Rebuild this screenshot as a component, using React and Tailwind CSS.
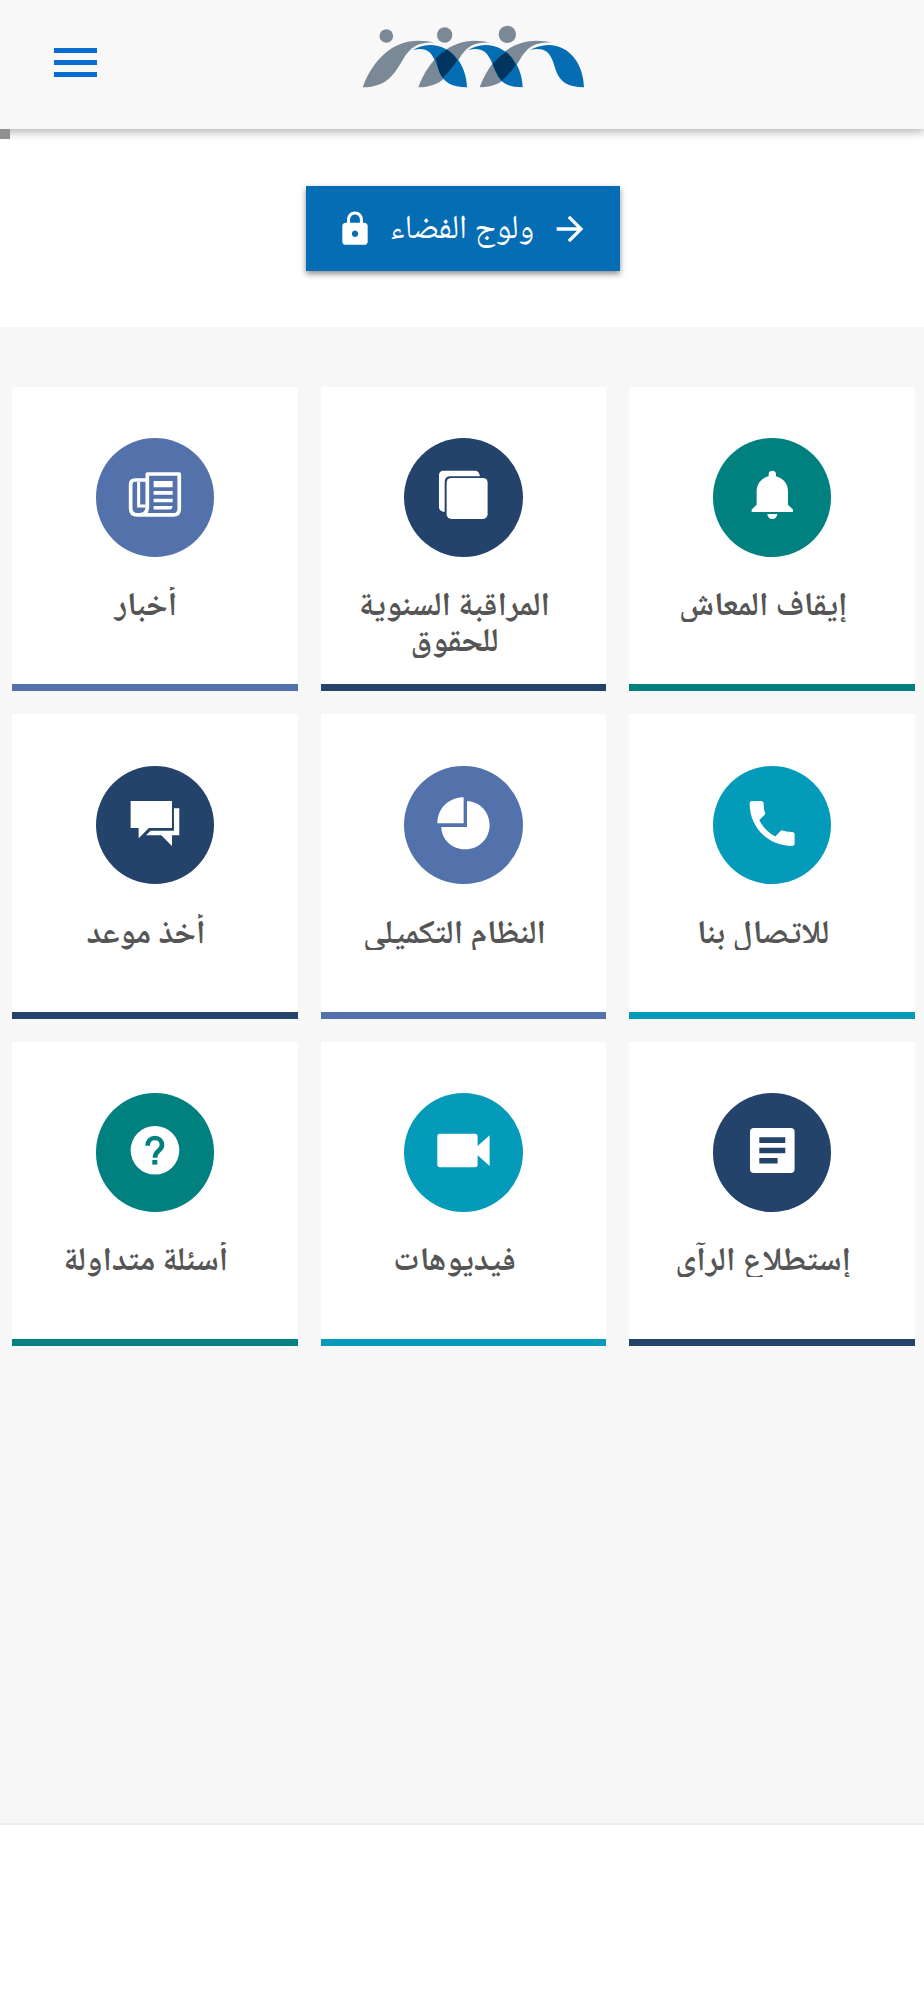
import React from 'react';

const cards = [
  {
    title: ['أخبار'],
    bg: 'bg-[#5372ac]',
    viewBox: '287 204 356 356',
    icon: (
      <>
        <path d="M441 414V312H537V417Q537 435 519 435H411Q391 435 391 415V343Q391 330 404 330H441M441 410Q441 433 420 434" fill="none" stroke="#fff" strokeWidth="11" strokeLinejoin="round" />
        <path d="M415 336V408H436" fill="none" stroke="#fff" strokeWidth="9" />
        <path d="M460 333H517V352H460zM460 363H517V374H460zM460 386H517V397H460zM460 408H517Q515 419 508 419H460z" />
      </>
    ),
  },
  {
    title: ['المراقبة السنوية', 'للحقوق'],
    bg: 'bg-[#24436b]',
    viewBox: '283 204 356 356',
    icon: (
      <>
        <path d="M402 302H496Q509 302 511 319H422Q405 319 405 336V426Q388 424 388 411V316Q388 302 402 302z" />
        <rect x="411" y="324" width="123" height="123" rx="14" />
      </>
    ),
  },
  {
    title: ['إيقاف المعاش'],
    bg: 'bg-[#018080]',
    viewBox: '298 204 356 356',
    icon: (
      <>
        <path d="M465 319V313Q465 302 476 302T487 313V319C510 325 523 342 523 364V404L538 419V426H414V419L429 404V364C429 342 442 325 465 319z" />
        <path d="M461 432H491Q489 447 476 447T461 432z" />
      </>
    ),
  },
  {
    title: ['أخذ موعد'],
    bg: 'bg-[#24436b]',
    viewBox: '287 197 356 356',
    icon: (
      <>
        <path d="M391 302H515V383H446L415 414V383H391z" />
        <path d="M521 324H537V405H515V437L483 405H437L451 391H521z" />
      </>
    ),
  },
  {
    title: ['النظام التكميلي'],
    bg: 'bg-[#5372ac]',
    viewBox: '283 197 356 356',
    icon: (
      <>
        <path d="M462 291V369H383C383 323 419 291 462 291z" />
        <path d="M472 302C512 304 540 336 540 374C540 415 508 447 467 447C428 447 396 419 395 380H472z" />
      </>
    ),
  },
  {
    title: ['للاتصال بنا'],
    bg: 'bg-[#049aba]',
    viewBox: '298 197 356 356',
    icon: (
      <path d="M415 302H442Q450 302 450 310Q450 327 455 341L437 360Q454 392 485 409L503 390Q519 395 535 395Q543 395 543 403V430Q543 437 535 437C463 437 408 380 408 310Q408 302 415 302z" />
    ),
  },
  {
    title: ['أسئلة متداولة'],
    bg: 'bg-[#018080]',
    viewBox: '287 190 356 356',
    icon: (
      <>
        <circle cx="464" cy="362" r="73" />
        <path d="M442 348C442 334 451 325 464 325S485 334 485 347C485 363 464 363 464 384" fill="none" stroke="#018080" strokeWidth="14" />
        <path d="M456 391H471V405H456z" fill="#018080" />
      </>
    ),
  },
  {
    title: ['فيديوهات'],
    bg: 'bg-[#049aba]',
    viewBox: '1213 190 356 356',
    icon: (
      <path d="M1321 312H1426Q1434 312 1434 320V349L1470 317V409L1434 377V405Q1434 413 1426 413H1321Q1313 413 1313 405V320Q1313 312 1321 312z" />
    ),
  },
  {
    title: ['إستطلاع الرآي'],
    bg: 'bg-[#24436b]',
    viewBox: '754 190 356 356',
    icon: (
      <>
        <rect x="865" y="295" width="134" height="135" rx="12" />
        <path d="M893 323H971V340H893zM893 354H971V371H893zM893 385H948V402H893z" fill="#24436b" />
      </>
    ),
  },
];

function Logo() {
  return (
    <svg viewBox="0 0 750 255" className="w-[250px] h-[85px]">
      <g fill="#7b8997">
        <circle cx="109" cy="63" r="20.500" />
        <circle cx="284" cy="60" r="23" />
        <circle cx="472" cy="58" r="26" />
        <path d="M38 217C70 130 130 77 205 77Q235 77 257 83C200 80 180 100 160 132C135 172 115 217 38 217z" />
        <path d="M205 217C237 130 300 77 375 77Q402 77 421 83C366 80 347 100 327 132C302 172 278 217 205 217z" />
        <path d="M389 217C421 130 484 77 559 77Q588 77 607 83C550 80 531 100 511 132C486 172 462 217 389 217z" />
      </g>
      <g fill="#056db3">
        <path d="M189 105Q210 91 240 90C305 90 350 150 351 217C305 217 283 203 270 175C252 130 245 90 189 105z" />
        <path d="M355 105Q376 91 406 90C471 90 517 150 518 217C472 217 452 203 439 175C421 130 411 90 355 105z" />
        <path d="M540 105Q565 91 595 90C660 90 701 150 702 217C656 217 634 203 621 175C606 130 600 90 540 105z" />
      </g>
      <g fill="#00355f">
        <path d="M257 130Q272 113 291 104Q310 114 322 136Q302 167 278 189Q268 175 264 158Q261 141 257 130z" />
        <path d="M428 146Q444 126 468 111Q487 125 497 149Q480 177 455 197Q444 185 438 171Q431 155 428 146z" />
      </g>
    </svg>
  );
}

function Header() {
  return (
    <header className="relative z-10 flex h-[129px] bg-[#f8f8f8] shadow-[0_3px_9px_rgba(0,0,0,0.3)]">
      <button className="ml-[54px] mt-[48px] flex h-[29px] w-[43px] flex-col justify-between">
        <span className="h-[5px] w-full bg-[#0a6ed1]"></span>
        <span className="h-[5px] w-full bg-[#0a6ed1]"></span>
        <span className="h-[5px] w-full bg-[#0a6ed1]"></span>
      </button>
      <div className="ml-[253px] mt-[15px]">
        <Logo />
      </div>
    </header>
  );
}

function Card({ card }) {
  return (
    <div className={"h-[304.500px] pb-[7px] " + card.bg}>
      <div className="flex h-full flex-col items-center bg-white pt-[51.500px]">
        <div className={"size-[118.600px] shrink-0 rounded-full " + card.bg}>
          <svg viewBox={card.viewBox} fill="#fff" className="size-full">{card.icon}</svg>
        </div>
        <h3 dir="rtl" className="mt-[30px] w-full overflow-hidden pr-[1px] pl-[1px] text-center">
          {card.title.map((line) => (
            <span key={line} className="block h-[35.500px] -translate-x-[9px] pt-[4.500px] text-[33px] leading-[35.500px] font-bold whitespace-nowrap text-[#555]">
              {line}
            </span>
          ))}
        </h3>
      </div>
    </div>
  );
}

export default function App() {
  return (
    <div className="min-h-[2000px] bg-white font-['Noto_Naskh_Arabic','Noto_Sans',sans-serif]">
      <Header />
      <div className="relative h-[198px] pt-[57px]">
        <div className="absolute top-0 left-0 z-20 size-[10px] bg-[#909090]"></div>
        <button dir="rtl" className="mx-auto flex h-[85px] w-[314px] translate-x-[1px] items-center bg-[#056db3] pr-[30px] pl-[30px] text-white shadow-[0_3px_6px_rgba(0,0,0,0.45)]">
          <svg viewBox="0 0 24 24" fill="currentColor" className="size-[40px] shrink-0">
            <path d="M12 4l-1.410 1.410L16.170 11H4v2h12.170l-5.580 5.590L12 20l8-8z" />
          </svg>
          <span className="flex-1 pt-[5px] text-center text-[33.500px] leading-[40px] whitespace-nowrap">ولوج الفضاء</span>
          <svg viewBox="0 0 24 24" fill="currentColor" className="size-[38px] shrink-0">
            <path d="M18 8h-1V6c0-2.760-2.240-5-5-5S7 3.240 7 6v2H6c-1.100 0-2 .9-2 2v10c0 1.100.9 2 2 2h12c1.100 0 2-.9 2-2V10c0-1.100-.9-2-2-2zm-6 9c-1.100 0-2-.9-2-2s.9-2 2-2 2 .9 2 2-.9 2-2 2zm3.100-9H8.900V6c0-1.710 1.390-3.100 3.100-3.100s3.100 1.390 3.100 3.100v2z" />
          </svg>
        </button>
      </div>
      <main className="h-[1498px] border-b-2 border-[#ededed] bg-[#f7f7f7] pt-[59.500px] pr-[9px] pl-[12px]">
        <div className="grid grid-cols-3 gap-[23px]">
          {cards.map((card) => (
            <Card key={card.title[0]} card={card} />
          ))}
        </div>
      </main>
    </div>
  );
}
